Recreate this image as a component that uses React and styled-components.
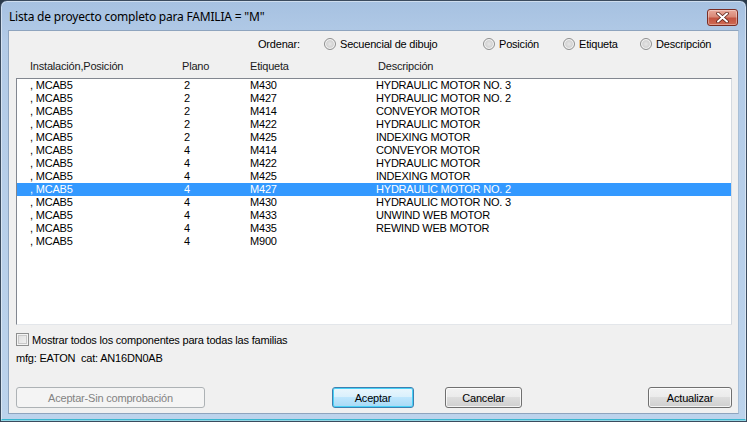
import React from 'react';
import styled, { createGlobalStyle } from 'styled-components';

const Global = createGlobalStyle`
  html, body {
    margin: 0;
    padding: 0;
    background: #2b3a4a;
  }
  * { box-sizing: border-box; }
`;

const Window = styled.div`
  width: 747px;
  height: 422px;
  display: flex;
  flex-direction: column;
  border: 1px solid #3b4b5e;
  border-radius: 7px 7px 0 0;
  background: linear-gradient(to bottom, #a6c1e1 0px, #b3cbe7 40px, #bcd3ec 100%);
  box-shadow: inset 0 0 0 1px rgba(255, 255, 255, 0.45), inset 0 -2px 0 #3ab6cf;
  font-family: 'Liberation Sans', Arial, sans-serif;
  font-size: 11px;
  letter-spacing: -0.2px;
  color: #000;
  overflow: hidden;
`;

const TitleBar = styled.div`
  height: 29px;
  flex: none;
  display: flex;
  align-items: center;
  padding: 0 8px 0 8px;
`;

const Title = styled.div`
  flex: 1;
  font-family: 'Noto Sans', 'Open Sans', sans-serif;
  font-size: 12px;
  color: #000;
  letter-spacing: -0.2px;
  padding-top: 1px;
`;

const CloseBtn = styled.div`
  width: 31px;
  height: 17px;
  margin-top: 4px;
  border: 1px solid #7a2d24;
  border-radius: 3px;
  background: linear-gradient(to bottom, #e9a99b 0%, #d98977 45%, #c35441 55%, #cf6b55 100%);
  box-shadow: inset 0 0 0 1px rgba(255, 255, 255, 0.35);
  display: flex;
  align-items: center;
  justify-content: center;
`;

const Client = styled.div`
  margin: 0 7px 7px 7px;
  flex: 1;
  background: #f0f0f0;
  border: 1px solid #8ea4be;
  border-right-color: #a9bfd6;
  display: flex;
  flex-direction: column;
  padding: 6px 6px 5px 7px;
`;

const SortRow = styled.div`
  height: 14px;
  display: flex;
  align-items: center;
  padding-left: 242px;
`;

const SortLabel = styled.span`
  width: 66px;
  flex: none;
`;

const Option = styled.label`
  width: ${(p) => p.$w}px;
  flex: none;
  display: flex;
  align-items: center;
  gap: 4px;
  white-space: nowrap;
`;

const Radio = styled.span`
  width: 12px;
  height: 12px;
  border-radius: 50%;
  border: 1px solid #8e8f8f;
  background: radial-gradient(circle at 50% 50%, #e6e6e6 0%, #d4d4d4 45%, #f4f4f4 100%);
  box-shadow: inset 0 0 0 1px #f6f6f6;
  flex: none;
`;

const HeaderRow = styled.div`
  margin-top: 8px;
  height: 14px;
  display: grid;
  grid-template-columns: 152px 68px 128px 1fr;
  padding-left: 14px;
  align-items: center;
  color: #1a1a1a;
`;

const List = styled.div`
  margin-top: 5px;
  height: 247px;
  flex: none;
  background: #fff;
  border: 1px solid #828790;
  border-right-color: #d5dae0;
  border-bottom-color: #e3e6ea;
  overflow: hidden;
`;

const Row = styled.div`
  height: 13px;
  display: grid;
  grid-template-columns: 154px 66px 126px 1fr;
  padding-left: 13px;
  align-items: center;
  line-height: 13px;
  white-space: nowrap;
  background: ${(p) => (p.$selected ? '#3399ff' : 'transparent')};
  color: ${(p) => (p.$selected ? '#fff' : '#000')};
`;

const CheckRow = styled.label`
  margin-top: 8px;
  height: 13px;
  display: flex;
  align-items: center;
  gap: 3px;
`;

const Checkbox = styled.span`
  width: 13px;
  height: 13px;
  flex: none;
  border: 1px solid #8e8f8f;
  background: linear-gradient(135deg, #dcdcdc 0%, #f4f4f4 100%);
  box-shadow: inset 0 0 0 1px #f4f4f4, inset 0 0 0 2px #c9c9c9;
`;

const Info = styled.div`
  margin-top: 6px;
  height: 13px;
  line-height: 13px;
  white-space: pre;
`;

const ButtonRow = styled.div`
  margin-top: 22px;
  height: 21px;
  display: flex;
  align-items: stretch;
`;

const Button = styled.button`
  width: ${(p) => p.$w}px;
  margin-left: ${(p) => (p.$ml === 'auto' ? 'auto' : `${p.$ml || 0}px`)};
  height: 21px;
  padding: 0;
  font-family: 'Liberation Sans', Arial, sans-serif;
  font-size: 11px;
  letter-spacing: -0.2px;
  color: #000;
  border: 1px solid #707070;
  border-radius: 3px;
  background: linear-gradient(to bottom, #f2f2f2 0%, #ebebeb 49%, #dddddd 50%, #cfcfcf 100%);
  box-shadow: inset 0 0 0 1px rgba(255, 255, 255, 0.75);

  &[data-default='true'] {
    border-color: #3c7fb1;
    box-shadow: inset 0 0 0 1px #48d1f6;
    background: linear-gradient(to bottom, #eaf6fd 0%, #d9f0fc 49%, #bee6fd 50%, #a7d9f5 100%);
  }

  &:disabled {
    color: #838383;
    border-color: #adb2b5;
    background: #f4f4f4;
    box-shadow: none;
  }
`;

const rows = [
  ['2', 'M430', 'HYDRAULIC MOTOR NO. 3'],
  ['2', 'M427', 'HYDRAULIC MOTOR NO. 2'],
  ['2', 'M414', 'CONVEYOR MOTOR'],
  ['2', 'M422', 'HYDRAULIC MOTOR'],
  ['2', 'M425', 'INDEXING MOTOR'],
  ['4', 'M414', 'CONVEYOR MOTOR'],
  ['4', 'M422', 'HYDRAULIC MOTOR'],
  ['4', 'M425', 'INDEXING MOTOR'],
  ['4', 'M427', 'HYDRAULIC MOTOR NO. 2'],
  ['4', 'M430', 'HYDRAULIC MOTOR NO. 3'],
  ['4', 'M433', 'UNWIND WEB MOTOR'],
  ['4', 'M435', 'REWIND WEB MOTOR'],
  ['4', 'M900', ''],
];

const CloseIcon = () => (
  <svg width="13" height="11" viewBox="0 0 13 11">
    <path d="M2 1.5 L11 9.5 M11 1.5 L2 9.5" stroke="#5a2018" strokeWidth="3.6" strokeLinecap="round" />
    <path d="M2 1.5 L11 9.5 M11 1.5 L2 9.5" stroke="#fff" strokeWidth="2" strokeLinecap="round" />
  </svg>
);

export default function App() {
  return (
    <>
      <Global />
      <Window>
        <TitleBar>
          <Title>Lista de proyecto completo para FAMILIA = "M"</Title>
          <CloseBtn>
            <CloseIcon />
          </CloseBtn>
        </TitleBar>
        <Client>
          <SortRow>
            <SortLabel>Ordenar:</SortLabel>
            <Option $w={159}><Radio />Secuencial de dibujo</Option>
            <Option $w={80}><Radio />Posición</Option>
            <Option $w={77}><Radio />Etiqueta</Option>
            <Option $w={80}><Radio />Descripción</Option>
          </SortRow>
          <HeaderRow>
            <span>Instalación,Posición</span>
            <span>Plano</span>
            <span>Etiqueta</span>
            <span>Descripción</span>
          </HeaderRow>
          <List>
            {rows.map(([plano, tag, desc], i) => (
              <Row key={i} $selected={i === 8}>
                <span>, MCAB5</span>
                <span>{plano}</span>
                <span>{tag}</span>
                <span>{desc}</span>
              </Row>
            ))}
          </List>
          <CheckRow>
            <Checkbox />
            Mostrar todos los componentes para todas las familias
          </CheckRow>
          <Info>{'mfg: EATON  cat: AN16DN0AB'}</Info>
          <ButtonRow>
            <Button $w={189} disabled>Aceptar-Sin comprobación</Button>
            <Button $w={82} $ml={127} data-default="true">Aceptar</Button>
            <Button $w={77} $ml={31}>Cancelar</Button>
            <Button $w={84} $ml="auto">Actualizar</Button>
          </ButtonRow>
        </Client>
      </Window>
    </>
  );
}
